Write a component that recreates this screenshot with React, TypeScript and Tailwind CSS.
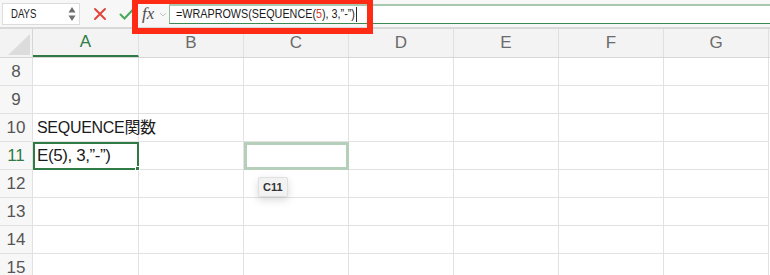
import React from "react";

const cols = ["A", "B", "C", "D", "E", "F", "G"];
const rows = [8, 9, 10, 11, 12, 13, 14, 15];

function Cell({ row, col }: { row: number; col: string }) {
  if (row === 10 && col === "A") {
    return (
      <div className="h-[28px] border-r border-b border-[#e1e1e1] pl-[4px] flex items-center text-[16px] tracking-[-0.3px] text-[#1b1b1b] whitespace-nowrap overflow-visible z-10">
        SEQUENCE関数
      </div>
    );
  }
  if (row === 11 && col === "A") {
    return (
      <div
        className="relative h-[28px] border-2 border-[#2f7a45] pl-[2px] flex items-center text-[17px] tracking-[-0.4px] text-[#1b1b1b] whitespace-nowrap"
        style={{ fontFamily: '"Liberation Sans", sans-serif' }}
      >
        E(5), 3,”-”)
        <span className="absolute -right-[3px] -bottom-[3px] w-[5px] h-[5px] bg-[#2f7a45] border border-white" />
      </div>
    );
  }
  if (row === 11 && col === "C") {
    return <div className="h-[28px] border-[3px] border-[#b5cfbb]" />;
  }
  if (row === 12 && col === "C") {
    return (
      <div className="relative h-[28px] border-r border-b border-[#e1e1e1]">
        <div className="absolute left-[14px] top-[7px] px-[4px] h-[20px] flex items-center bg-[#f2f2f2] border border-[#e0e0e0] rounded-[2px] shadow-[0_3px_8px_rgba(0,0,0,0.15)] text-[11px] font-semibold text-[#333]">
          C11
        </div>
      </div>
    );
  }
  return <div className="h-[28px] border-r border-b border-[#e1e1e1]" />;
}

export default function App() {
  return (
    <div
      className="relative w-[770px] h-[275px] overflow-hidden bg-white"
      style={{ fontFamily: '"Liberation Sans", "Noto Sans CJK JP", sans-serif' }}
    >
      {/* toolbar */}
      <div className="flex items-center h-[29px] bg-[#f7f7f7] border-b-2 border-[#d8d8d8]">
        <div className="ml-[2px] w-[78px] h-[22px] bg-white border border-[#dcdcdc] flex items-center justify-between pl-[8px] pr-[3px] text-[12px] text-[#222]">
          <span className="inline-block origin-left scale-x-[0.8]">DAYS</span>
          <svg width="8" height="16" viewBox="0 0 8 16">
            <path d="M4 1 L7.5 6.5 L0.5 6.5 Z" fill="#6f6f6f" />
            <path d="M4 15 L7.5 9.5 L0.5 9.5 Z" fill="#6f6f6f" />
          </svg>
        </div>
        <div className="w-[10px]" />
        <svg width="14" height="14" viewBox="0 0 14 14" className="ml-[3px]">
          <path d="M2 2 L12 12 M12 2 L2 12" stroke="#e0473c" strokeWidth="2" strokeLinecap="round" />
        </svg>
        <svg width="16" height="14" viewBox="0 0 16 14" className="ml-[12px]">
          <path d="M1.5 7.5 L5.5 11.5 L14.5 2" stroke="#49a85a" strokeWidth="2" fill="none" strokeLinecap="round" />
        </svg>
        <span
          className="ml-[7px] text-[17px] italic text-[#4d4d4d]"
          style={{ fontFamily: '"Liberation Serif", serif' }}
        >
          fx
        </span>
        <svg width="8" height="6" viewBox="0 0 8 6" className="ml-[5px] mt-[2px]">
          <path d="M1 1 L4 4 L7 1" stroke="#c4c4c4" strokeWidth="1" fill="none" />
        </svg>
        <div className="ml-[2px] flex-1 h-[20px] bg-white border-t-2 border-l border-b border-t-[#a6c9af] border-l-[#8fbd9b] border-b-[#3b8a51] flex items-center pl-[6px] text-[13px] text-[#1b1b1b] whitespace-nowrap">
          <div
            className="flex items-center origin-left scale-x-[0.83]"
            style={{ fontFamily: '"Liberation Sans", sans-serif' }}
          >
            <span>=WRAPROWS(SEQUENCE(</span>
            <span className="text-[#d43b34]">5</span>
            <span>), 3,”-”)</span>
            <span className="ml-[1px] w-[1px] h-[15px] bg-black" />
          </div>
        </div>
      </div>

      {/* red highlight */}
      <div className="absolute left-[132px] -top-[2px] w-[241px] h-[36px] border-[6px] border-[#ff2b14] pointer-events-none z-20" />

      {/* column headers */}
      <div className="grid grid-cols-[33px_106px_105px_105px_105px_105px_105px_105px] h-[29px] bg-[#f3f3f3] border-b border-[#d6d6d6]">
        <div className="relative border-r border-[#d6d6d6]">
          <svg width="33" height="29" viewBox="0 0 33 29" className="absolute inset-0">
            <path d="M8 26 L30 5 L30 26 Z" fill="#dcdcdc" />
          </svg>
        </div>
        {cols.map((c) => (
          <div
            key={c}
            className={
              c === "A"
                ? "flex items-center justify-center text-[17px] text-[#2f7a45] border-r border-[#e0e0e0] border-b-2 border-b-[#2f7a45]"
                : "flex items-center justify-center text-[17px] text-[#6b6b6b] border-r border-[#e0e0e0]"
            }
          >
            {c}
          </div>
        ))}
      </div>

      {/* rows */}
      {rows.map((r) => (
        <div key={r} className="grid grid-cols-[33px_106px_105px_105px_105px_105px_105px_105px]">
          <div
            className={
              r === 11
                ? "h-[28px] flex items-center justify-center bg-[#f7f7f7] border-r border-b border-[#e1e1e1] text-[17px] text-[#2f7a45]"
                : "h-[28px] flex items-center justify-center bg-[#f7f7f7] border-r border-b border-[#e1e1e1] text-[17px] text-[#555]"
            }
          >
            {r}
          </div>
          {cols.map((c) => (
            <Cell key={c} row={r} col={c} />
          ))}
        </div>
      ))}
    </div>
  );
}
